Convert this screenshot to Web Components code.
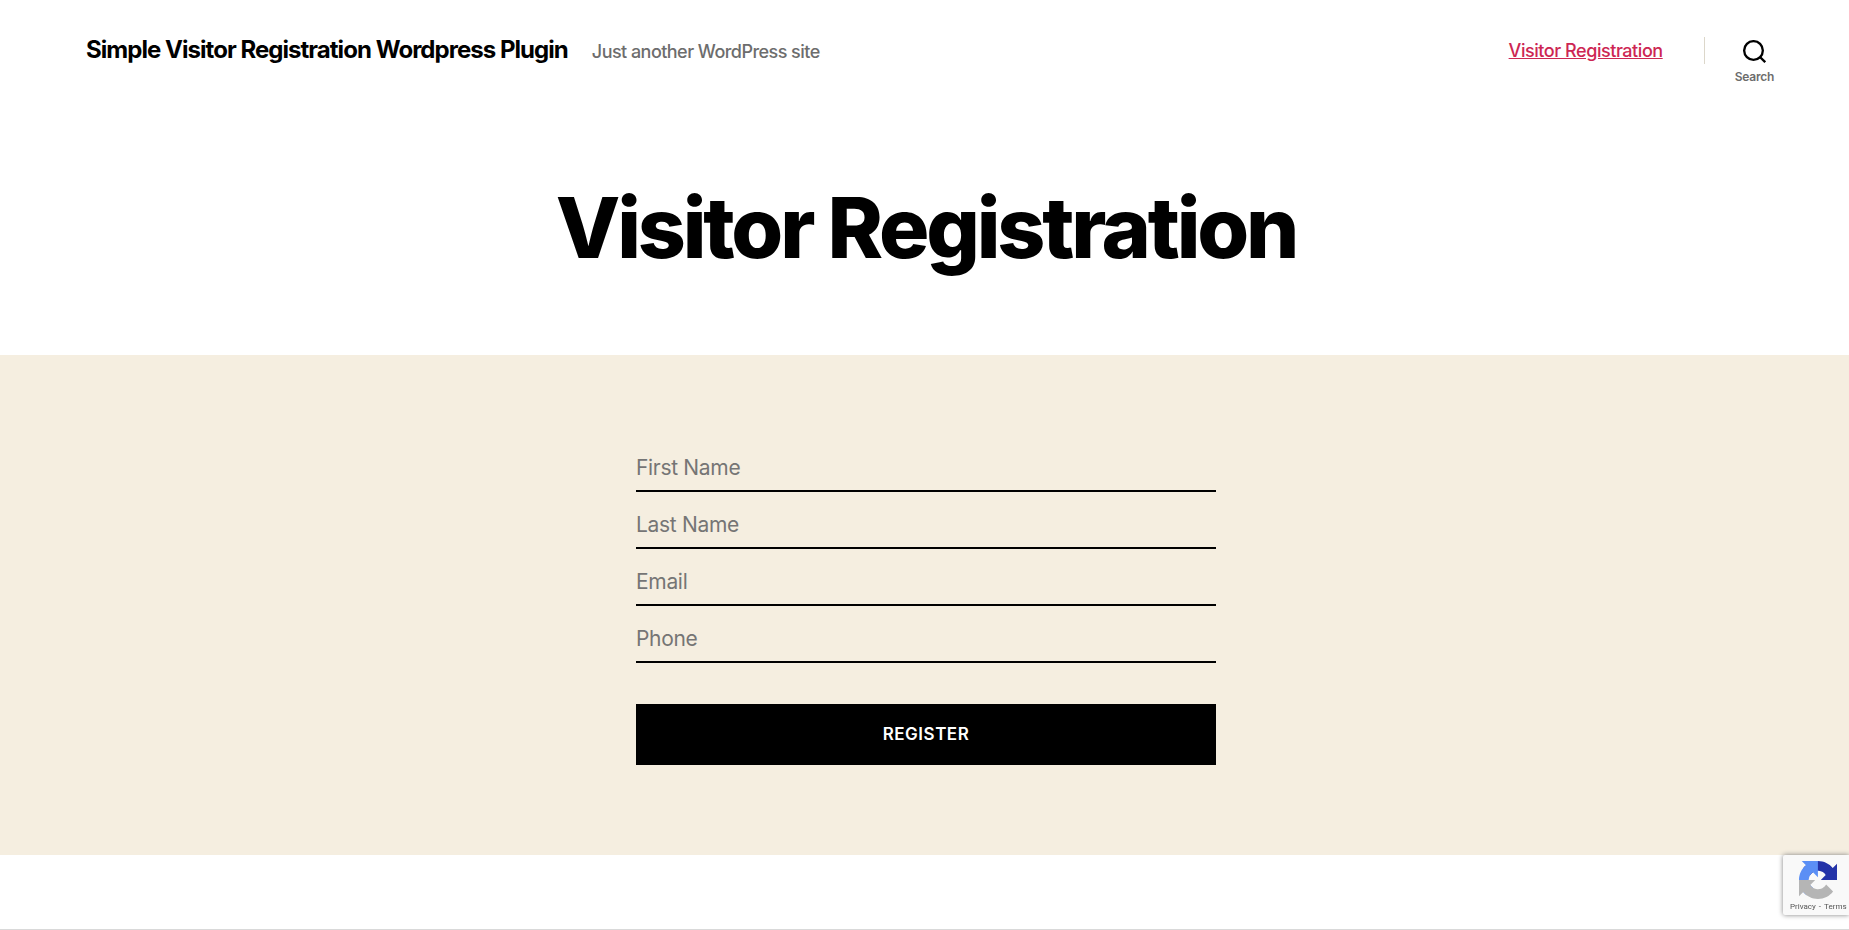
<!DOCTYPE html>
<html lang="en">
<head>
<meta charset="utf-8">
<title>Visitor Registration</title>
<style>
  :root {
    --accent: #cd2653;
    --muted: #6d6d6d;
    --line: #dcd7ca;
    --cream: #f5eee0;
  }
  body {
    margin: 0;
    padding-left: 3px;
    background: #fff;
    color: #000;
    font-family: Inter, "Liberation Sans", sans-serif;
    overflow-x: hidden;
  }
</style>
</head>
<body>
<site-header>
  <a slot="title" href="#">Simple Visitor Registration Wordpress Plugin</a>
  <span slot="tagline">Just another WordPress site</span>
  <a slot="nav" href="#">Visitor Registration</a>
</site-header>
<main>
  <page-title>Visitor Registration</page-title>
  <registration-form></registration-form>
</main>
<site-footer></site-footer>
<recaptcha-badge></recaptcha-badge>

<script>
  const define = (name, html) => {
    const template = document.createElement('template');
    template.innerHTML = html;
    customElements.define(name, class extends HTMLElement {
      constructor() {
        super();
        this.attachShadow({ mode: 'open' }).append(template.content.cloneNode(true));
      }
    });
  };

  define('search-toggle', `
    <style>
      :host { display: block; }
      button {
        display: flex; flex-direction: column; align-items: center; gap: 7px;
        margin: 0; padding: 0; border: 0; background: none; cursor: pointer;
        font: 600 12px/14px Inter, "Liberation Sans", sans-serif;
        letter-spacing: -0.02em; color: var(--muted);
      }
      svg { display: block; width: 23px; height: 23px; }
    </style>
    <button type="button">
      <svg viewBox="0 0 23 23" fill="none" stroke="#000" stroke-width="2.33" aria-hidden="true">
        <circle cx="10.5" cy="10.5" r="9.34"/><path d="M16.7 16.7 22.2 22.2"/>
      </svg>
      Search
    </button>`);

  define('site-header', `
    <style>
      :host { display: block; }
      header {
        display: flex; justify-content: space-between; align-items: flex-start;
        max-width: 1680px; margin: 0 auto; padding-top: 37px;
      }
      .titles { display: flex; align-items: baseline; gap: 24px; }
      ::slotted([slot=title]) {
        color: #000; text-decoration: none;
        font-size: 24px; line-height: 26px; font-weight: 700; letter-spacing: -0.04em;
      }
      ::slotted([slot=tagline]) {
        color: var(--muted); font-size: 18px; line-height: 26px; font-weight: 500; letter-spacing: -0.03em;
      }
      .tools { display: flex; align-items: flex-start; margin-right: -8px; }
      nav { padding-right: 41px; }
      ::slotted([slot=nav]) {
        display: block; color: var(--accent); text-decoration: underline;
        font-size: 18px; line-height: 28px; font-weight: 500; letter-spacing: -0.025em;
      }
      .search { padding: 3px 0 0 30px; }
      .rule { width: 1px; height: 27px; background: var(--line); }
    </style>
    <header>
      <div class="titles"><slot name="title"></slot><slot name="tagline"></slot></div>
      <div class="tools">
        <nav><slot name="nav"></slot></nav>
        <div class="rule"></div>
        <div class="search"><search-toggle></search-toggle></div>
      </div>
    </header>`);

  define('page-title', `
    <style>
      :host { display: block; padding: 96px 40px 79px; text-align: center; }
      h1 { margin: 0; font-size: 84px; line-height: 96px; font-weight: 800; letter-spacing: -0.038em; }
    </style>
    <h1><slot></slot></h1>`);

  define('registration-form', `
    <style>
      :host { display: block; margin-left: -3px; padding: 80px 0 90px 3px; background: var(--cream); }
      form { display: flex; flex-direction: column; max-width: 580px; margin: 0 auto; }
      input {
        box-sizing: border-box; width: 100%; height: 57px; margin: 0;
        padding: 10px 0 0; border: 0; border-bottom: 2px solid #000; border-radius: 0;
        background: none; color: #000; outline: 0;
        font: 400 21px/26px Inter, "Liberation Sans", sans-serif; letter-spacing: -0.015em;
      }
      input::placeholder { color: #757575; opacity: 1; }
      button {
        height: 61px; margin: 41px 0 0; padding: 0; border: 0; background: #000; color: #fff;
        font: 600 17px/21px Inter, "Liberation Sans", sans-serif;
        letter-spacing: 0.03em; text-transform: uppercase; cursor: pointer;
      }
    </style>
    <form>
      <input type="text" name="first" placeholder="First Name" aria-label="First Name">
      <input type="text" name="last" placeholder="Last Name" aria-label="Last Name">
      <input type="email" name="email" placeholder="Email" aria-label="Email">
      <input type="tel" name="phone" placeholder="Phone" aria-label="Phone">
      <button type="button">Register</button>
    </form>`);

  define('site-footer', `
    <style>
      :host { display: block; margin-left: -3px; padding-top: 74px; }
      footer { border-top: 1px solid #d9d9d9; }
    </style>
    <footer></footer>`);

  define('recaptcha-badge', `
    <style>
      :host {
        position: fixed; right: 0; bottom: 15px; box-sizing: border-box;
        width: 66px; height: 60px; padding-top: 6px;
        background: #f9f9f9; border-radius: 2px 0 0 2px; box-shadow: 0 0 5px gray;
      }
      svg { display: block; width: 38px; height: 38px; margin: 0 auto 3px 16px; }
      p {
        display: flex; gap: 3px; margin: 0 0 0 7px; color: #555; white-space: nowrap;
        font: 400 8px/10px Roboto, "Liberation Sans", sans-serif;
      }
      a { color: inherit; text-decoration: none; }
    </style>
    <svg viewBox="0 0 64 64" aria-hidden="true">
      <path fill="#2433a8" d="M64 31.955l-.033-1.37V4.687l-7.16 7.16C50.948 4.674 42.033.093 32.05.093c-10.4 0-19.622 4.96-25.458 12.64l11.736 11.86a15.55 15.55 0 0 1 4.754-5.334c2.05-1.6 4.952-2.906 8.968-2.906.485 0 .86.057 1.135.163 4.976.393 9.288 3.14 11.828 7.124l-8.307 8.307L64 31.953"/>
      <path fill="#5b8ff5" d="M31.862.094l-1.37.033H4.594l7.16 7.16C4.58 13.147 0 22.06 0 32.046c0 10.4 4.96 19.622 12.64 25.458L24.5 45.768a15.55 15.55 0 0 1-5.334-4.754c-1.6-2.05-2.906-4.952-2.906-8.968 0-.485.057-.86.163-1.135.393-4.976 3.14-9.288 7.124-11.828l8.307 8.307L31.86.095"/>
      <path fill="#b5b5b5" d="M.001 32.045l.033 1.37v25.898l7.16-7.16c5.86 7.173 14.774 11.754 24.76 11.754 10.4 0 19.622-4.96 25.458-12.64l-11.736-11.86a15.55 15.55 0 0 1-4.754 5.334c-2.05 1.6-4.952 2.906-8.968 2.906-.485 0-.86-.057-1.135-.163-4.976-.393-9.288-3.14-11.828-7.124l8.307-8.307c-10.522.04-22.4.066-27.295-.005"/>
    </svg>
    <p><a href="#">Privacy</a><span>-</span><a href="#">Terms</a></p>`);
</script>
</body>
</html>
